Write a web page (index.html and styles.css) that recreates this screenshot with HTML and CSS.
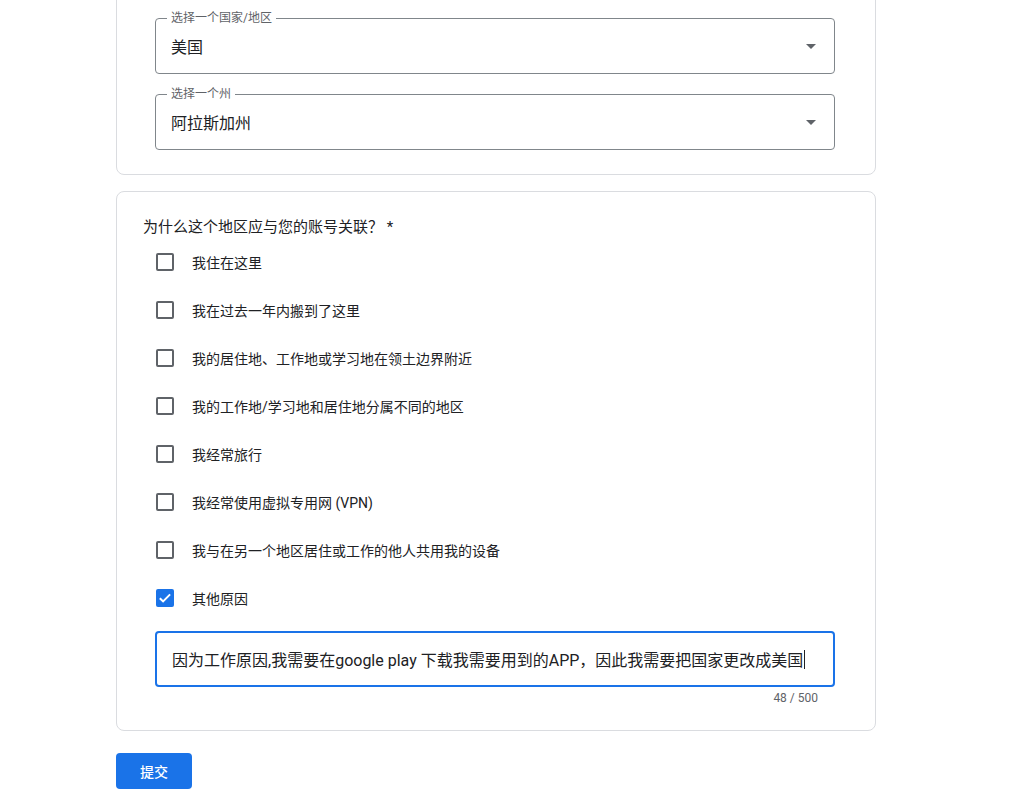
FILE: index.html
```html
<!DOCTYPE html>
<html lang="zh-CN">
<head>
  <meta charset="UTF-8">
  <title>地区更改申请</title>
  <link rel="stylesheet" href="styles.css">
</head>
<body>
  <div id="page">
    <div class="card card-region">
      <fieldset class="select-box">
        <legend>选择一个国家/地区</legend>
        <div class="select-value">
          <span>美国</span>
          <span class="arrow"></span>
        </div>
      </fieldset>
      <fieldset class="select-box">
        <legend>选择一个州</legend>
        <div class="select-value">
          <span>阿拉斯加州</span>
          <span class="arrow"></span>
        </div>
      </fieldset>
    </div>

    <div class="card card-reason">
      <div class="question">为什么这个地区应与您的账号关联？ *</div>
      <ul class="options">
        <li><span class="box"></span>我住在这里</li>
        <li><span class="box"></span>我在过去一年内搬到了这里</li>
        <li><span class="box"></span>我的居住地、工作地或学习地在领土边界附近</li>
        <li><span class="box"></span>我的工作地/学习地和居住地分属不同的地区</li>
        <li><span class="box"></span>我经常旅行</li>
        <li><span class="box"></span>我经常使用虚拟专用网 (VPN)</li>
        <li><span class="box"></span>我与在另一个地区居住或工作的他人共用我的设备</li>
        <li>
          <span class="box checked">
            <svg viewBox="0 0 18 18" width="18" height="18"><path d="M3.8 9.2l3.3 3.2 7-7" fill="none" stroke="#fff" stroke-width="2"/></svg>
          </span>其他原因
        </li>
      </ul>
      <div class="text-field">因为工作原因,我需要在google play 下载我需要用到的APP，因此我需要把国家更改成美国<span class="caret"></span></div>
      <div class="counter">48 / 500</div>
    </div>

    <button class="submit">提交</button>
  </div>
</body>
</html>
```

FILE: styles.css
```css
* {
  font-family: Roboto, "Noto Sans CJK SC", sans-serif;
  box-sizing: border-box;
}
html, body {
  margin: 0;
  background: #fff;
  color: #202124;
}
#page {
  width: 760px;
  margin-left: 116px;
}
.card {
  border: 1px solid #dadce0;
  border-radius: 8px;
  background: #fff;
}
.card-region {
  margin-top: -40px;
  padding: 49px 40px 24px 38px;
}
.select-box {
  margin: 0 0 12px 0;
  padding: 0 18px 7px 15px;
  border: 1px solid #80868b;
  border-radius: 4px;
  min-width: 0;
}
.select-box:last-child {
  margin-bottom: 0;
}
.select-box legend {
  font-size: 12px;
  line-height: 16px;
  color: #5f6368;
  padding: 0 4px;
  margin-left: -4px;
}
.select-value {
  height: 40px;
  display: flex;
  align-items: center;
  justify-content: space-between;
  font-size: 16px;
}
.arrow {
  width: 0;
  height: 0;
  border-left: 5px solid transparent;
  border-right: 5px solid transparent;
  border-top: 5px solid #5f6368;
}
.card-reason {
  margin-top: 16px;
  padding: 25px 40px 24px 26px;
}
.question {
  font-size: 15px;
  line-height: 20px;
}
.options {
  list-style: none;
  margin: 1px 0 0 0;
  padding: 0 0 0 13px;
}
.options li {
  height: 48px;
  display: flex;
  align-items: center;
  font-size: 14px;
}
.box {
  width: 18px;
  height: 18px;
  border: 2px solid #5f6368;
  border-radius: 2px;
  margin-right: 18px;
  flex-shrink: 0;
}
.box.checked {
  border: none;
  background: #1a73e8;
}
.box svg {
  display: block;
}
.text-field {
  margin: 9px 0 0 12px;
  height: 56px;
  border: 2px solid #1a73e8;
  border-radius: 4px;
  padding: 0 15px;
  display: flex;
  align-items: center;
  font-size: 16px;
  white-space: nowrap;
}
.caret {
  display: inline-block;
  width: 1px;
  height: 19px;
  background: #202124;
  margin-left: 1px;
}
.counter {
  margin-top: 3px;
  padding-right: 17px;
  text-align: right;
  font-size: 12px;
  line-height: 16px;
  color: #5f6368;
}
.submit {
  margin-top: 22px;
  width: 76px;
  height: 36px;
  border: none;
  border-radius: 4px;
  background: #1a73e8;
  color: #fff;
  font-size: 14px;
  font-weight: 500;
  cursor: pointer;
}
```
